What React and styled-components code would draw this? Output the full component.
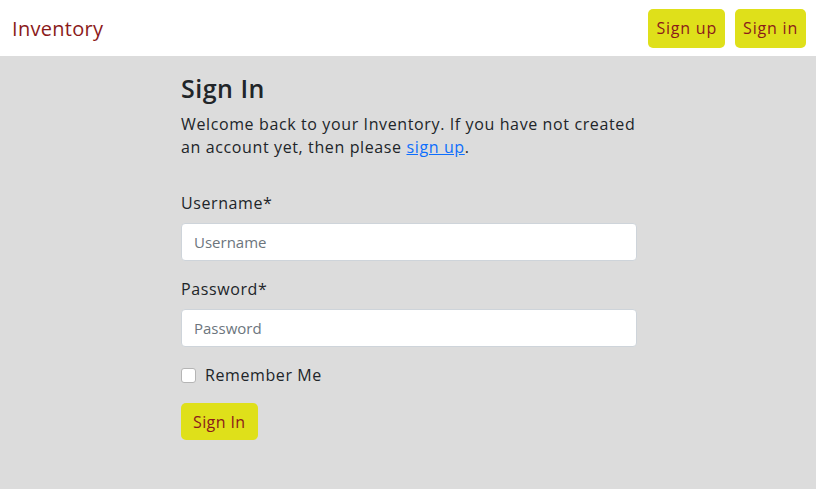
import React from "react";
import styled, { createGlobalStyle } from "styled-components";

const GlobalStyle = createGlobalStyle`
  html, body {
    margin: 0;
    padding: 0;
    background: #dcdcdc;
    font-family: "Open Sans", "Noto Sans", sans-serif;
    color: #212529;
  }
  * { box-sizing: border-box; }
`;

const NavBar = styled.nav`
  height: 56px;
  background: #fff;
  display: flex;
  align-items: center;
  justify-content: space-between;
  padding: 0 10px 0 12px;
`;

const Brand = styled.a`
  font-size: 20px;
  color: #8b1a1a;
  text-decoration: none;
  letter-spacing: 0.3px;
`;

const NavActions = styled.div`
  display: flex;
  gap: 10px;
`;

const YellowButton = styled.button`
  background: #dfe01a;
  color: #8b1a1a;
  border: none;
  border-radius: 5px;
  font-family: inherit;
  font-size: 16px;
  letter-spacing: ${(p) => (p.$nav ? "0.8px" : "0.4px")};
  height: ${(p) => (p.$nav ? "39px" : "37px")};
  padding: 0 ${(p) => (p.$nav ? "8px" : "12px")};
  cursor: pointer;
`;

const Main = styled.main`
  width: 458px;
  margin: 0 auto;
  padding: 16px 0 0 2px;
`;

const Title = styled.h1`
  margin: 0 0 9px;
  font-size: 25px;
  font-weight: 600;
  letter-spacing: 0.5px;
  line-height: 32px;
`;

const Intro = styled.p`
  margin: 0 0 32px;
  font-size: 16px;
  line-height: 23px;
  letter-spacing: 0.62px;

  a {
    color: #0d6efd;
  }
`;

const Field = styled.div`
  margin-bottom: 16px;
`;

const Label = styled.label`
  display: block;
  font-size: 16px;
  letter-spacing: 0.6px;
  line-height: 24px;
  margin-bottom: 8px;
`;

const Input = styled.input`
  display: block;
  width: 100%;
  height: 38px;
  padding: 0 12px;
  border: 1px solid #ced4da;
  border-radius: 4px;
  background: #fff;
  font-family: inherit;
  font-size: 15px;
  color: #212529;

  &::placeholder {
    color: #6c757d;
  }
`;

const CheckRow = styled.label`
  display: flex;
  align-items: center;
  gap: 9px;
  font-size: 16px;
  letter-spacing: 0.6px;
  line-height: 24px;
  margin: 0 0 16px;
`;

const Box = styled.input`
  appearance: none;
  width: 15px;
  height: 15px;
  margin: 0;
  background: #fff;
  border: 1px solid #b5b5b5;
  border-radius: 3px;
`;

export default function App() {
  return (
    <>
      <GlobalStyle />
      <NavBar>
        <Brand href="#">Inventory</Brand>
        <NavActions>
          <YellowButton $nav>Sign up</YellowButton>
          <YellowButton $nav>Sign in</YellowButton>
        </NavActions>
      </NavBar>
      <Main>
        <Title>Sign In</Title>
        <Intro>
          Welcome back to your Inventory. If you have not created an account
          yet, then please <a href="#">sign up</a>.
        </Intro>
        <Field>
          <Label>Username*</Label>
          <Input placeholder="Username" />
        </Field>
        <Field>
          <Label>Password*</Label>
          <Input type="password" placeholder="Password" />
        </Field>
        <CheckRow>
          <Box type="checkbox" />
          Remember Me
        </CheckRow>
        <YellowButton>Sign In</YellowButton>
      </Main>
    </>
  );
}
